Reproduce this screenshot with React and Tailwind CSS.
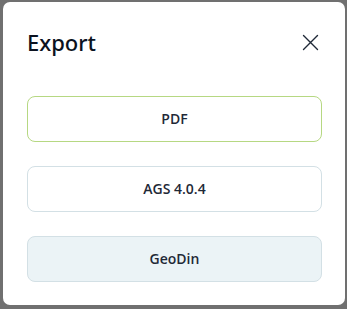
import React from 'react';

export default function App(){
  const options = [
    {label:'PDF', cls:'border-[#b6d882] bg-white'},
    {label:'AGS 4.0.4', cls:'border-[#d3e0e5] bg-white'},
    {label:'GeoDin', cls:'border-[#d3e0e5] bg-[#ebf3f6]'},
  ];
  return (
    <div className="w-[347px] h-[309px] bg-[#707070] flex pt-[2px] pl-[3px]" style={{fontFamily:'"Open Sans", "Noto Sans", sans-serif'}}>
      <div className="w-[342px] h-[303px] bg-white rounded-[7px] px-6 pt-[24px] flex flex-col">
        <div className="flex items-center justify-between">
          <h2 className="text-[22px] leading-[32px] text-[#0b1220] font-medium" style={{fontFamily:'"Noto Sans", sans-serif'}}>Export</h2>
          <button className="w-8 h-8 flex items-center justify-center mr-[-5px] text-[#1f2937]">
            <svg width="17" height="17" viewBox="0 0 17 17" fill="none" stroke="currentColor" strokeWidth="1.4" strokeLinecap="round">
              <path d="M1.5 1.5L15.5 15.5M15.5 1.5L1.5 15.5"/>
            </svg>
          </button>
        </div>
        <div className="flex flex-col gap-6 mt-[38px] mr-[-1px]">
          {options.map(o=> (
            <button key={o.label} className={"h-[46px] w-full rounded-lg border text-sm font-semibold text-[#1f2937] " + o.cls}>{o.label}</button>
          ))}
        </div>
      </div>
    </div>
  );
}
